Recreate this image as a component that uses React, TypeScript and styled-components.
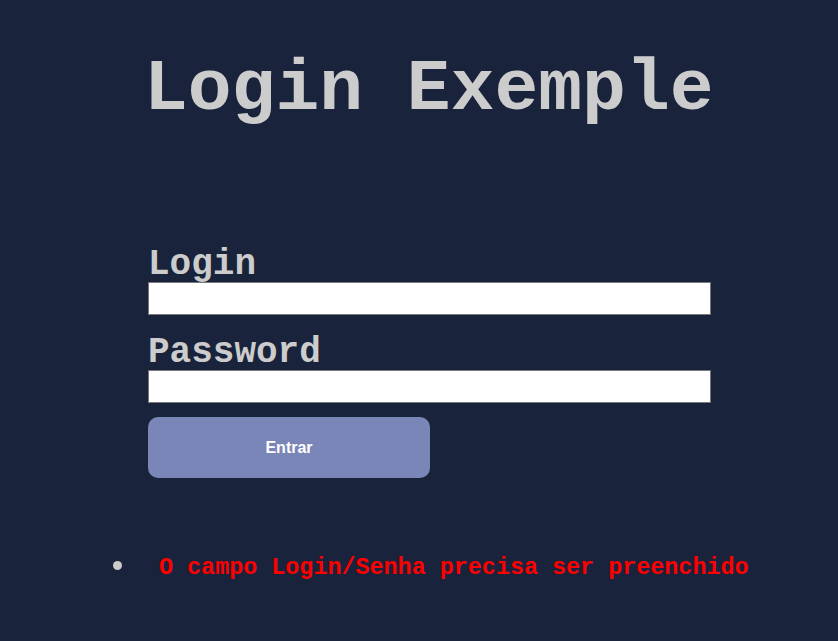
import React from "react";
import styled, { createGlobalStyle } from "styled-components";

const GlobalStyle = createGlobalStyle`
  html, body {
    margin: 0;
    padding: 0;
    background: #19233c;
  }
  body {
    font-family: "Liberation Mono", "Courier New", monospace;
    color: #cccccc;
  }
`;

const Page = styled.main`
  min-height: 641px;
  display: flex;
  flex-direction: column;
  padding-left: 148px;
  box-sizing: border-box;
`;

const Title = styled.h1`
  margin: 49px 0 0 -4px;
  font-family: "Liberation Mono", "Courier New", monospace;
  font-weight: bold;
  font-size: 73px;
  line-height: 82px;
  color: #cccccc;
`;

const Form = styled.form`
  display: flex;
  flex-direction: column;
  width: 563px;
  margin-top: 117px;
`;

const Label = styled.label`
  font-family: "Liberation Mono", "Courier New", monospace;
  font-weight: bold;
  font-size: 36px;
  line-height: 34px;
  color: #cccccc;
`;

const Input = styled.input`
  box-sizing: border-box;
  width: 563px;
  height: 33px;
  margin: 0 0 21px 0;
  padding: 0 4px;
  border: 1px solid #767676;
  background: #ffffff;
  font-size: 16px;
`;

const Button = styled.button`
  width: 282px;
  height: 61px;
  margin-top: -7px;
  border: none;
  border-radius: 10px;
  background: #7a86b8;
  color: #ffffff;
  font-family: "Liberation Sans", Arial, sans-serif;
  font-weight: bold;
  font-size: 16px;
  cursor: pointer;
`;

const Errors = styled.ul`
  margin: 75px 0 0 -35px;
  padding: 0;
  list-style: none;
`;

const ErrorItem = styled.li`
  display: flex;
  align-items: center;
  gap: 37px;
  color: #cccccc;
`;

const Dot = styled.span`
  width: 9px;
  height: 9px;
  border-radius: 50%;
  background: #cccccc;
  flex: none;
  margin-top: -6px;
`;

const ErrorText = styled.span`
  font-family: "Liberation Mono", "Courier New", monospace;
  font-weight: bold;
  font-size: 23.4px;
  line-height: 30px;
  color: #ff0000;
`;

export default function App() {
  return (
    <>
      <GlobalStyle />
      <Page>
        <Title>Login Exemple</Title>
        <Form onSubmit={(e) => e.preventDefault()}>
          <Label htmlFor="login">Login</Label>
          <Input id="login" type="text" />
          <Label htmlFor="password">Password</Label>
          <Input id="password" type="password" />
          <Button type="submit">Entrar</Button>
        </Form>
        <Errors>
          <ErrorItem>
            <Dot />
            <ErrorText>O campo Login/Senha precisa ser preenchido</ErrorText>
          </ErrorItem>
        </Errors>
      </Page>
    </>
  );
}
